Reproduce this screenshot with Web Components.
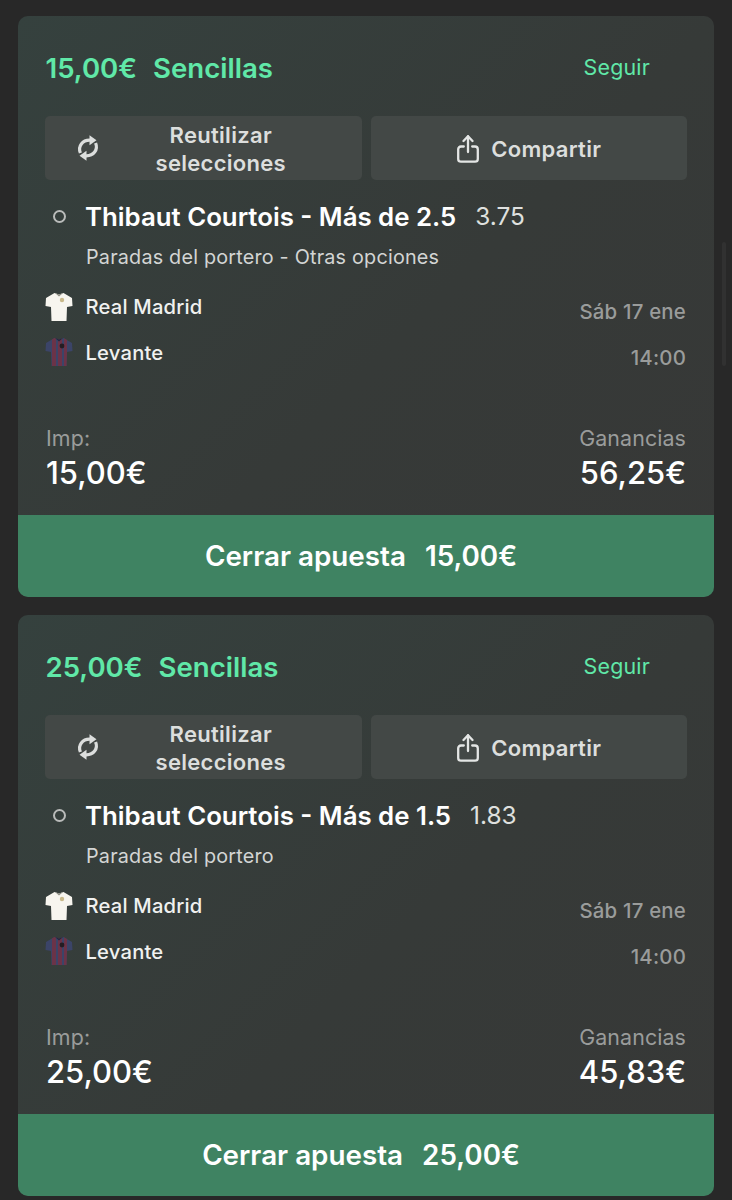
<!DOCTYPE html>
<html lang="es"><head><meta charset="utf-8"><title>Apuestas</title>
<style>
html,body{margin:0;background:#282828;height:1200px;overflow:hidden}
body{padding:16px 18px 0;box-sizing:border-box;display:flex;flex-direction:column;gap:18px;font-family:Inter,"Liberation Sans",sans-serif;-webkit-font-smoothing:antialiased}
page-scrollbar{position:absolute;left:722px;top:242px}
</style></head>
<body>
<bet-card stake="15,00€" pick="Thibaut Courtois - Más de 2.5" odds="3.75" market="Paradas del portero - Otras opciones" win="56,25€"></bet-card>
<bet-card stake="25,00€" pick="Thibaut Courtois - Más de 1.5" odds="1.83" market="Paradas del portero" win="45,83€"></bet-card>
<page-scrollbar></page-scrollbar>
<script>
const tpl=(html)=>{const t=document.createElement('template');t.innerHTML=html;return t;};
function def(name,html){
  const t=tpl(html);
  customElements.define(name,class extends HTMLElement{
    constructor(){super();this.attachShadow({mode:'open'}).appendChild(t.content.cloneNode(true));}
  });
}
def('page-scrollbar',`<style>:host{display:block;width:4px;height:124px;border-radius:2px;background:#313131}</style>`);
def('icon-refresh',`<style>:host{display:block;width:24px;height:26px}svg{display:block}</style>
<svg width="24" height="26" viewBox="0 0 24 26" fill="none" stroke="#dcdedd" stroke-width="3.2"><path d="M4.4 18C1.6 11 6.5 5 14 5.2"/><path d="M19.6 8C22.4 15 17.5 21 10 20.8"/><path d="M13.5 0.2L20.5 5.2L13.5 10.2Z" fill="#dcdedd" stroke="none"/><path d="M10.5 15.8L3.5 20.8L10.5 25.8Z" fill="#dcdedd" stroke="none"/></svg>`);
def('icon-share',`<style>:host{display:block;width:24px;height:28px;margin-top:-1px}svg{display:block}</style>
<svg width="24" height="28" viewBox="0 0 24 28" fill="none" stroke="#e4e6e5" stroke-width="2.3" stroke-linecap="round" stroke-linejoin="round"><path d="M12 1.5V17"/><path d="M7.5 6L12 1.2L16.5 6"/><path d="M7.8 11.5H5C3.2 11.5 2.2 12.5 2.2 14.2V24C2.2 25.7 3.2 26.7 5 26.7H19C20.8 26.7 21.8 25.7 21.8 24V14.2C21.8 12.5 20.8 11.5 19 11.5H16.2"/></svg>`);
def('shirt-madrid',`<style>:host{display:block;width:28px;height:30px}svg{display:block}</style>
<svg width="28" height="30" viewBox="0 0 28 30"><path d="M9.5 1L14 2.5L18.5 1L27 6L27.5 14L22 15L21.5 29L6.5 29L6 15L0.5 14L1 6Z" fill="#f7f5ef"/><path d="M10 1L14 4.5L18 1L14 2.5Z" fill="#8c8b82"/><circle cx="17" cy="8" r="2.2" fill="#c9b98a"/></svg>`);
def('shirt-levante',`<style>:host{display:block;width:28px;height:30px}svg{display:block}</style>
<svg width="28" height="30" viewBox="0 0 28 30"><defs><clipPath id="c"><path d="M9.5 1L14 2.5L18.5 1L27 6L27.5 14L22 15L21.5 29L6.5 29L6 15L0.5 14L1 6Z"/></clipPath></defs><g clip-path="url(#c)"><rect width="28" height="30" fill="#3b4468"/><rect x="7" width="4" height="30" fill="#6b3348"/><rect x="13" width="4" height="30" fill="#6b3348"/><rect x="19" width="3" height="30" fill="#6b3348"/></g><path d="M10 1L14 4.5L18 1L14 2.5Z" fill="#23283f"/><circle cx="17" cy="9" r="2.4" fill="#241c22"/></svg>`);
def('action-button',`<style>:host{display:flex;flex:1 1 0;min-width:0;height:64px;box-sizing:border-box;align-items:center;border-radius:5px;background:#434846;color:#dcdedd;font-size:22px;font-weight:600;line-height:28px;text-align:center;letter-spacing:.3px}
.l{display:flex;flex:0 0 auto;padding-left:var(--pl,0)}.t{flex:1;padding:2px var(--pr,0) 0 0}</style><span class="l"><slot name="icon"></slot></span><span class="t"><slot></slot></span>`);
def('team-row',`<style>:host{display:flex;align-items:center;height:36px;gap:12px;font-size:20.2px;font-weight:500;color:#f0f1f0;letter-spacing:.2px}span{padding-left:.5px}</style><slot name="shirt"></slot><span><slot></slot></span>`);
def('amount-block',`<style>:host{display:flex;flex-direction:column}.a{font-size:21.4px;line-height:24px;color:#9a9c9b;letter-spacing:.1px}.b{margin-top:5px;font-size:31px;line-height:36px;font-weight:500;color:#fff}</style><div class="a"><slot name="label"></slot></div><div class="b"><slot></slot></div>`);
const cardT=tpl(`<style>
:host{display:block;width:696px;height:581px;border-radius:10px;overflow:hidden;background:linear-gradient(135deg,#35413e 0%,#363a38 55%,#373837 100%);flex:none}
.pad{padding:32px 27px 0;box-sizing:border-box;height:499px}
.head{display:flex;justify-content:space-between;align-items:center;height:40px;margin-bottom:28px}
.title{display:flex;gap:16px;padding-left:.5px;font-size:27.6px;font-weight:600;color:#60e8a8}
.follow{font-size:21.4px;color:#60e8a8;padding-right:37px;position:relative;top:-1px;letter-spacing:.2px}
.actions{display:flex;gap:9px}
.pick{display:flex;align-items:center;height:40px;margin-top:16px}
.dot{width:13px;height:13px;box-sizing:border-box;border:2px solid #b9bbba;border-radius:50%;margin:0 20px 0 8px}
.name{font-size:25.8px;font-weight:600;color:#fff;margin-left:-1px}
.odds{margin-left:19px;font-size:24.4px;color:#dfe0df}
.market{margin:9px 0 0 41px;font-size:19.8px;line-height:24px;color:#d3d5d4;letter-spacing:.2px}
.match{display:flex;justify-content:space-between;margin-top:20px;height:81px}
.teams{display:flex;flex-direction:column;gap:10px}
.when{display:flex;flex-direction:column;gap:10px;padding:5px 1px 0 0;align-items:flex-end;font-size:20.4px;font-weight:500;line-height:36px;color:#9a9c9b;letter-spacing:.2px}
.foot{display:flex;justify-content:space-between;margin-top:56px;padding:0 1px}
.foot amount-block:last-child{align-items:flex-end}
.close{height:82px;box-sizing:border-box;padding-right:10px;display:flex;gap:19px;align-items:center;justify-content:center;background:#3f8362;color:#fff;font-size:27.8px;font-weight:600}
</style>
<div class="pad">
<div class="head"><span class="title"><span class="s1"></span><span>Sencillas</span></span><span class="follow">Seguir</span></div>
<div class="actions">
<action-button style="--pl:31px;--pr:20px"><icon-refresh slot="icon"></icon-refresh>Reutilizar<br>selecciones</action-button>
<action-button><span style="display:flex;align-items:center;justify-content:center;gap:11px"><icon-share></icon-share><span>Compartir</span></span></action-button>
</div>
<div class="pick"><span class="dot"></span><span class="name"></span><span class="odds"></span></div>
<div class="market"></div>
<div class="match">
<div class="teams"><team-row><shirt-madrid slot="shirt"></shirt-madrid>Real Madrid</team-row><team-row><shirt-levante slot="shirt"></shirt-levante>Levante</team-row></div>
<div class="when"><span>Sáb 17 ene</span><span>14:00</span></div>
</div>
<div class="foot">
<amount-block><span slot="label">Imp:</span><span class="stake"></span></amount-block>
<amount-block><span slot="label">Ganancias</span><span class="win"></span></amount-block>
</div>
</div>
<div class="close"><span>Cerrar apuesta</span><span class="s2"></span></div>`);
customElements.define('bet-card',class extends HTMLElement{
  constructor(){super();const s=this.attachShadow({mode:'open'});s.appendChild(cardT.content.cloneNode(true));}
  connectedCallback(){
    const s=this.shadowRoot,a=n=>this.getAttribute(n),q=c=>s.querySelector(c);
    q('.s1').textContent=a('stake');
    q('.name').textContent=a('pick');q('.odds').textContent=a('odds');q('.market').textContent=a('market');
    q('.stake').textContent=a('stake');q('.win').textContent=a('win');
    q('.s2').textContent=a('stake');
  }
});
</script>
</body></html>
